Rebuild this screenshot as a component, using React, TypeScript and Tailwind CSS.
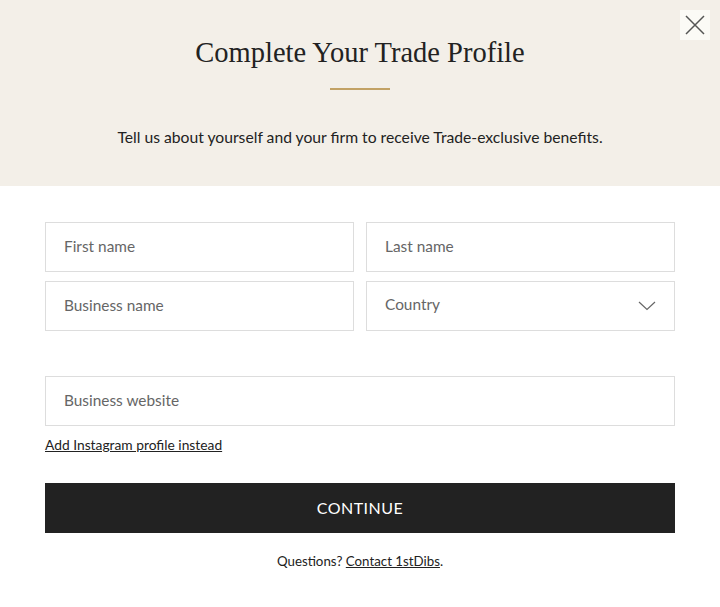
import React from 'react';

function Field({ placeholder }: { placeholder: string }) {
  return (
    <input
      placeholder={placeholder}
      className="h-[50px] w-full border border-[#dddddd] bg-white px-[18px] pb-[2px] text-[15.4px] text-[#222] placeholder:text-[#666] outline-none"
    />
  );
}

export default function App() {
  return (
    <div className="min-h-[607px] w-[720px] bg-white font-['Lato',sans-serif] text-[#222]">
      {/* Header */}
      <div className="relative flex h-[186px] flex-col items-center bg-[#f3efe8]">
        <button className="absolute right-[10px] top-[10px] flex h-[30px] w-[30px] items-center justify-center bg-[#fbfaf6]">
          <svg width="20" height="20" viewBox="0 0 20 20" fill="none" stroke="#555" strokeWidth="1.5">
            <path d="M1 1L19 19M19 1L1 19" />
          </svg>
        </button>
        <h1 className="mt-[35px] font-['Liberation_Serif',serif] text-[28.5px] leading-[36px] text-[#222]">
          Complete Your Trade Profile
        </h1>
        <div className="mt-[17px] h-[2px] w-[60px] bg-[#c2a265]" />
        <p className="mt-[37px] text-[15.7px] leading-[20px] text-[#222]">
          Tell us about yourself and your firm to receive Trade-exclusive benefits.
        </p>
      </div>

      {/* Form */}
      <div className="px-[45px] pt-[36px]">
        <div className="grid grid-cols-2 gap-x-[12px] gap-y-[9px]">
          <Field placeholder="First name" />
          <Field placeholder="Last name" />
          <Field placeholder="Business name" />
          <div className="flex h-[50px] items-center justify-between border border-[#dddddd] bg-white pl-[18px] pr-[18px] text-[15.4px] text-[#666]">
            <span className="-mt-[2px]">Country</span>
            <svg width="18" height="10" viewBox="0 0 18 10" fill="none" stroke="#666" strokeWidth="1.2">
              <path d="M1 1L9 8.5L17 1" />
            </svg>
          </div>
        </div>

        <div className="mt-[45px]">
          <Field placeholder="Business website" />
        </div>
        <a href="#" className="mt-[10px] block text-[13.8px] leading-[18px] text-[#222] underline">
          Add Instagram profile instead
        </a>

        <button className="mt-[29px] h-[50px] w-full bg-[#222] text-[16px] tracking-[0.5px] text-white">
          CONTINUE
        </button>

        <p className="mt-[19px] text-center text-[13.3px] leading-[18px] text-[#222]">
          Questions? <a href="#" className="underline">Contact 1stDibs</a>.
        </p>
      </div>
    </div>
  );
}
